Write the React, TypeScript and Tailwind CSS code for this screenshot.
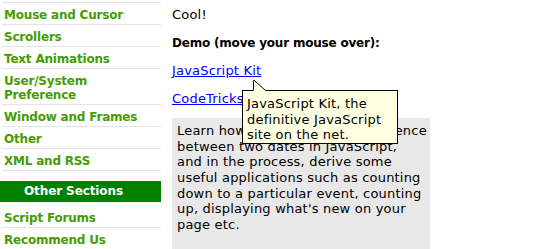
// @ts-nocheck
import React from "react";

const topLinks = [
  "Mouse and Cursor",
  "Scrollers",
  "Text Animations",
  "User/System Preference",
  "Window and Frames",
  "Other",
  "XML and RSS",
];

const otherLinks = ["Script Forums", "Recommend Us"];

const blurb = [
  "Learn how to calculate the difference",
  "between two dates in JavaScript,",
  "and in the process, derive some",
  "useful applications such as counting",
  "down to a particular event, counting",
  "up, displaying what's new on your",
  "page etc.",
];

function SideLink({ label, last }) {
  return (
    <li
      className={
        "pl-[2px] pt-[5px] pb-[2px] leading-[14px] text-[12px] tracking-[-0.2px] font-bold text-[#469c00] " +
        (last ? "" : "border-b border-[#e4e4e4]")
      }
    >
      {label}
    </li>
  );
}

export default function App() {
  return (
    <div className="flex w-[550px] h-[249px] overflow-hidden bg-white text-[13px] tracking-[0.2px] text-black font-['DejaVu_Sans',Verdana,sans-serif]">
      {/* Left menu */}
      <div className="w-[161px] shrink-0">
        <ul className="mt-[2px] ml-[2px] w-[159px] border-t border-[#e4e4e4]">
          {topLinks.map((t) => (
            <SideLink key={t} label={t} />
          ))}
        </ul>
        <div className="mt-[10px] h-[21px] bg-[#008000] pl-[24px] leading-[21px] text-[12px] tracking-[-0.1px] font-bold text-white">
          Other Sections
        </div>
        <ul className="mt-[4px] ml-[2px] w-[159px]">
          {otherLinks.map((t, i) => (
            <SideLink key={t} label={t} last={i === otherLinks.length - 1} />
          ))}
        </ul>
      </div>

      {/* Main content */}
      <div className="relative ml-[11px] pt-[7px] flex flex-col">
        <p className="leading-4">Cool!</p>
        <p className="mt-[12px] leading-4 text-[12px] tracking-[-0.2px] font-bold">
          Demo (move your mouse over):
        </p>
        <p className="mt-[12px] leading-4">
          <a href="#" className="text-[#0000ff] underline">JavaScript Kit</a>
        </p>
        <p className="mt-[12px] leading-4">
          <a href="#" className="text-[#0000ff] underline">CodeTricks</a>
        </p>
        <div className="mt-[11px] w-[258px] flex-1 bg-[#e8e8e8] px-[5px] pt-[5px] leading-[15.67px] whitespace-nowrap">
          {blurb.map((line, i) => (
            <div key={i}>{line}</div>
          ))}
        </div>

        {/* Tooltip */}
        <div className="absolute left-[70px] top-[90px] w-[156px] h-[54px] border border-black bg-[#ffffe1] pl-[4px] pt-[5px] leading-[15.67px] whitespace-nowrap">
          JavaScript Kit, the
          <br />
          definitive JavaScript
          <br />
          site on the net.
        </div>
        <svg className="absolute left-[81px] top-[80px]" width="13" height="11" viewBox="0 0 13 11">
          <polygon points="0,11 0,0 2,0 13,11" fill="#ffffe1" />
          <path d="M0.5 10.5 V0.5 H1.5 L12.5 10.5" fill="none" stroke="#000" strokeWidth="1" />
        </svg>
      </div>
    </div>
  );
}
